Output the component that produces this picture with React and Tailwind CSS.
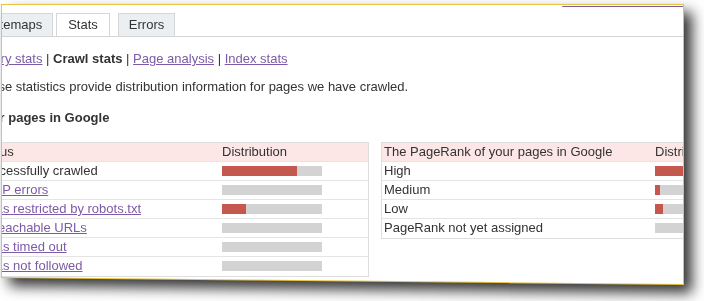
import React from 'react';

const font = { fontFamily: '"Liberation Sans", Arial, sans-serif' };

const crawlRows = [
  { label: 'Successfully crawled', link: false, value: 75 },
  { label: 'HTTP errors', link: true, value: 0 },
  { label: 'URLs restricted by robots.txt', link: true, value: 24 },
  { label: 'Unreachable URLs', link: true, value: 0 },
  { label: 'URLs timed out', link: true, value: 0 },
  { label: 'URLs not followed', link: true, value: 0 },
];

const rankRows = [
  { label: 'High', value: 90 },
  { label: 'Medium', value: 5 },
  { label: 'Low', value: 8 },
  { label: 'PageRank not yet assigned', value: 0 },
];

const Bar = ({ value }) => (
  <div className="h-[10px] w-[100px] bg-[#d3d3d3]">
    <div className="h-full bg-[#c4574e]" style={{ width: value + 'px' }} />
  </div>
);

const Tab = ({ children, active, className = '' }) => (
  <div
    className={
      'h-[23px] border border-b-0 border-[#d6d6d6] px-[10px] leading-[21px] text-[#333] ' +
      (active ? 'bg-white px-[11px] ' : 'bg-[#eceff2] ') +
      className
    }
  >
    {children}
  </div>
);

const Table = ({ head, rows, cols, className = '' }) => (
  <div className={'shrink-0 border border-[#dedede] ' + className}>
    <div className={'grid h-[19px] border-b border-[#e4e4e4] bg-[#fde6e6] leading-[18px] ' + cols}>
      <div className="pl-[2px] whitespace-nowrap">{head}</div>
      <div className="whitespace-nowrap">Distribution</div>
    </div>
    {rows.map((r, i) => (
      <div
        key={r.label}
        className={'grid h-[19px] leading-[18px] ' + cols + (i < rows.length - 1 ? ' border-b border-[#e4e4e4]' : '')}
      >
        <div className="pl-[2px] whitespace-nowrap">
          {r.link ? <a className="text-[#7c5aa8] underline">{r.label}</a> : r.label}
        </div>
        <div className="flex items-center pb-px">
          <Bar value={r.value} />
        </div>
      </div>
    ))}
  </div>
);

export default function App() {
  return (
    <div className="h-[301px] w-[704px] overflow-hidden bg-white text-[13px] text-[#333]" style={font}>
      {/* framed screenshot: yellow edge, slanted bottom, drop shadow */}
      <div className="ml-px mt-[4px] w-[683px] [filter:drop-shadow(8px_8px_7px_rgba(0,0,0,0.8))]">
        <div className="h-[281px] bg-[#e6c444] p-px [clip-path:polygon(0_0,100%_0,100%_100%,0_calc(100%-7px))]">
          <div className="h-full overflow-hidden bg-white [clip-path:polygon(0_0,100%_0,100%_100%,0_calc(100%-7px))]">
            <div className="-ml-[28px]">
              <div className="flex h-[32px] items-end border-b border-[#d4d4d4]">
                <Tab className="ml-[3px]">Sitemaps</Tab>
                <Tab active className="ml-[3px]">Stats</Tab>
                <Tab className="ml-[8px]">Errors</Tab>
                <a className="-mt-[12px] ml-[387px] shrink-0 self-start whitespace-nowrap leading-[15px] text-[#555] underline decoration-[#7c5aa8]">
                  About statistics we show
                </a>
              </div>

              <div className="mt-[14px] pl-[2px] leading-[15px] whitespace-nowrap">
                <a className="text-[#7c5aa8] underline">Query stats</a> | <b>Crawl stats</b> |{' '}
                <a className="text-[#7c5aa8] underline">Page analysis</a> |{' '}
                <a className="text-[#7c5aa8] underline">Index stats</a>
              </div>

              <p className="mt-[13px] pl-[2px] leading-[15px] whitespace-nowrap">
                These statistics provide distribution information for pages we have crawled.
              </p>

              <h3 className="mt-[16px] pl-[2px] font-bold leading-[15px] whitespace-nowrap">Your pages in Google</h3>

              <div className="mt-[17px] flex items-start gap-[12px]">
                <Table head="Status" rows={crawlRows} cols="grid-cols-[247px_100px]" className="w-[395px]" />
                <Table
                  head="The PageRank of your pages in Google"
                  rows={rankRows}
                  cols="grid-cols-[273px_120px]"
                  className="w-[400px]"
                />
              </div>
            </div>
          </div>
        </div>
      </div>
    </div>
  );
}
